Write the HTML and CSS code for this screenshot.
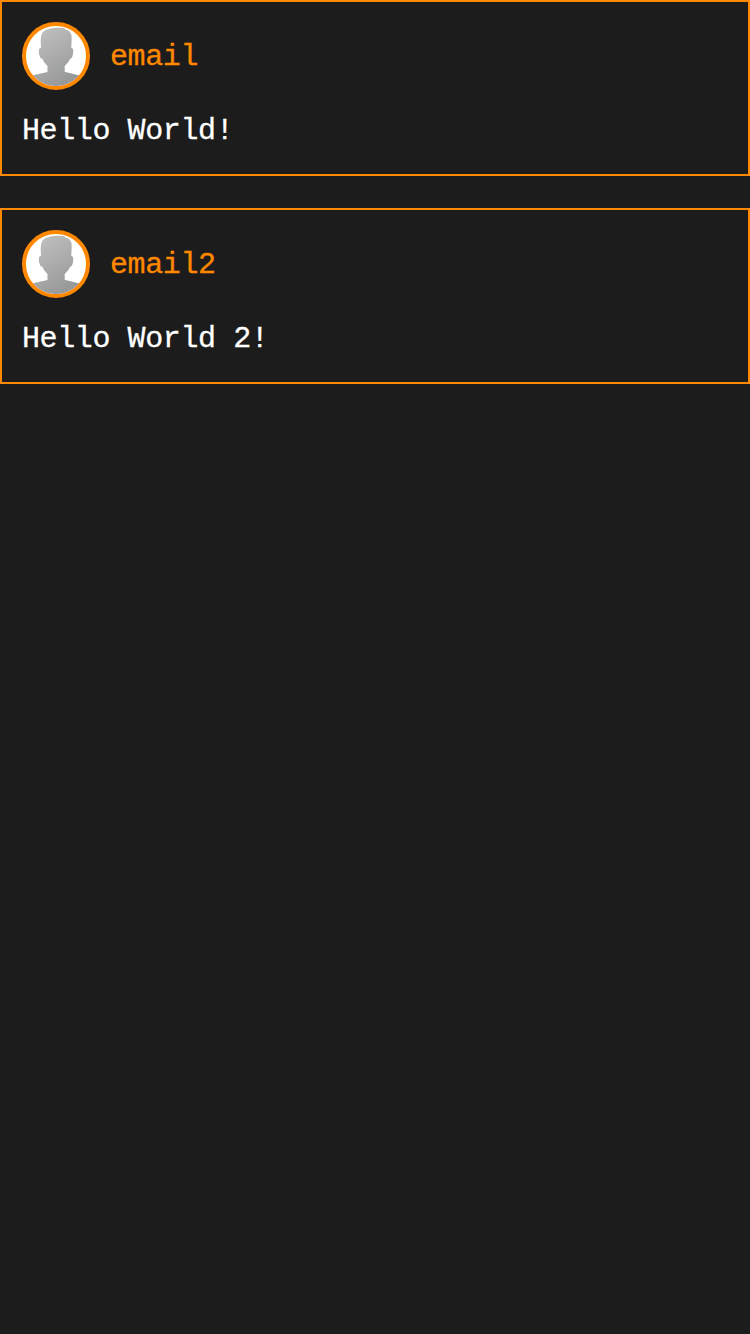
FILE: index.html
```html
<!DOCTYPE html>
<html lang="en">
<head>
<meta charset="utf-8">
<title>Messages</title>
<link rel="stylesheet" href="styles.css">
</head>
<body>
<svg width="0" height="0" class="defs" aria-hidden="true">
  <defs>
    <linearGradient id="shade" gradientUnits="userSpaceOnUse" x1="12" y1="0" x2="48" y2="60">
      <stop offset="0" stop-color="#c2c2c2"/>
      <stop offset="1" stop-color="#929394"/>
    </linearGradient>
    <symbol id="person" viewBox="0 0 60 60">
      <path fill="url(#shade)" d="M14.800 13C15.200 8 16.500 5.500 20 3.800C24 2.200 30 1.300 34 1.800C37 1.500 39 2.300 40 4C43 4 45 6.500 45.500 9.500C46 13 45.300 18 45.300 22C47.500 22 47.500 25 47 28C46.600 31 45.500 32.800 44 32.800C43 36 40.500 38 38.700 40V45.800C42 47 47 47.700 52.500 49.200L60 54V60H0V54L7.500 49.200C13 47.700 19 47 21.500 45.800V40C19.500 38 17.500 36 16.600 32.800C14.500 33 13.500 30.500 13 27.500C12.700 24.500 12.800 22 15 22C15 19 14.500 17 14.800 13Z"/>
    </symbol>
  </defs>
</svg>
<main class="messages">
  <article class="message">
    <header class="author">
      <svg class="avatar"><use href="#person"/></svg>
      <span class="email">email</span>
    </header>
    <p class="text">Hello World!</p>
  </article>
  <article class="message">
    <header class="author">
      <svg class="avatar"><use href="#person"/></svg>
      <span class="email">email2</span>
    </header>
    <p class="text">Hello World 2!</p>
  </article>
</main>
</body>
</html>
```

FILE: styles.css
```css
* { box-sizing: border-box; }

body {
  margin: 0;
  min-height: 100vh;
  background: #1c1c1c;
  color: #fff;
  font: 30px/44px "Liberation Mono", monospace;
  letter-spacing: -0.4px;
  -webkit-text-stroke: 0.3px currentColor;
}

.defs { display: block; }

.messages {
  display: flex;
  flex-direction: column;
  gap: 32px;
}

.message {
  height: 176px;
  padding: 20px;
  border: 2px solid #ff8800;
}

.author {
  display: flex;
  align-items: center;
  gap: 20px;
}

.avatar {
  width: 68px;
  height: 68px;
  border: 4px solid #ff8800;
  border-radius: 50%;
  background: #fff;
}

.email {
  padding-top: 2px;
  color: #ff8800;
}

.text { margin: 19px 0 0; }
```
